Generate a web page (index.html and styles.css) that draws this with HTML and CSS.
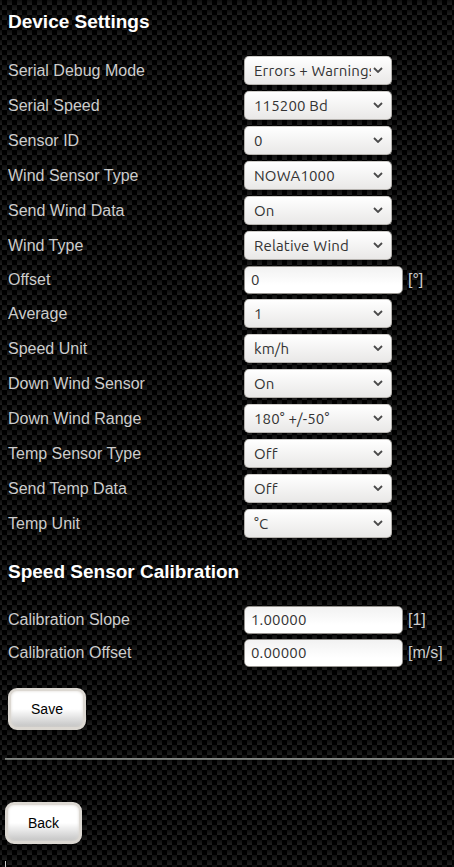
FILE: index.html
```html
<!DOCTYPE html>
<html lang="en">
<head>
<meta charset="utf-8">
<title>Device Settings</title>
<link rel="stylesheet" href="styles.css">
</head>
<body>
<form class="settings">
<h3>Device Settings</h3>
<div class="row"><label>Serial Debug Mode</label><div class="select"><span class="value">Errors + Warnings</span><svg viewBox="0 0 10 6"><path d="M1 1l4 4 4-4"/></svg></div></div>
<div class="row"><label>Serial Speed</label><div class="select"><span class="value">115200 Bd</span><svg viewBox="0 0 10 6"><path d="M1 1l4 4 4-4"/></svg></div></div>
<div class="row"><label>Sensor ID</label><div class="select"><span class="value">0</span><svg viewBox="0 0 10 6"><path d="M1 1l4 4 4-4"/></svg></div></div>
<div class="row"><label>Wind Sensor Type</label><div class="select"><span class="value">NOWA1000</span><svg viewBox="0 0 10 6"><path d="M1 1l4 4 4-4"/></svg></div></div>
<div class="row"><label>Send Wind Data</label><div class="select"><span class="value">On</span><svg viewBox="0 0 10 6"><path d="M1 1l4 4 4-4"/></svg></div></div>
<div class="row"><label>Wind Type</label><div class="select"><span class="value">Relative Wind</span><svg viewBox="0 0 10 6"><path d="M1 1l4 4 4-4"/></svg></div></div>
<div class="row field"><label>Offset</label><input type="text" value="0"><span class="unit">[°]</span></div>
<div class="row"><label>Average</label><div class="select"><span class="value">1</span><svg viewBox="0 0 10 6"><path d="M1 1l4 4 4-4"/></svg></div></div>
<div class="row"><label>Speed Unit</label><div class="select"><span class="value">km/h</span><svg viewBox="0 0 10 6"><path d="M1 1l4 4 4-4"/></svg></div></div>
<div class="row"><label>Down Wind Sensor</label><div class="select"><span class="value">On</span><svg viewBox="0 0 10 6"><path d="M1 1l4 4 4-4"/></svg></div></div>
<div class="row"><label>Down Wind Range</label><div class="select"><span class="value">180° +/-50°</span><svg viewBox="0 0 10 6"><path d="M1 1l4 4 4-4"/></svg></div></div>
<div class="row"><label>Temp Sensor Type</label><div class="select"><span class="value">Off</span><svg viewBox="0 0 10 6"><path d="M1 1l4 4 4-4"/></svg></div></div>
<div class="row"><label>Send Temp Data</label><div class="select"><span class="value">Off</span><svg viewBox="0 0 10 6"><path d="M1 1l4 4 4-4"/></svg></div></div>
<div class="row"><label>Temp Unit</label><div class="select"><span class="value">°C</span><svg viewBox="0 0 10 6"><path d="M1 1l4 4 4-4"/></svg></div></div>
<h3 class="second">Speed Sensor Calibration</h3>
<div class="row field"><label>Calibration Slope</label><input type="text" value="1.00000"><span class="unit">[1]</span></div>
<div class="row field"><label>Calibration Offset</label><input type="text" value="0.00000"><span class="unit">[m/s]</span></div>
<button type="button" class="btn save">Save</button>
</form>
<hr>
<button type="button" class="btn back">Back</button>
<div class="frame-edge"></div>
</body>
</html>
```
FILE: styles.css
```css
* { box-sizing: border-box; }
html { background: #000; }
body {
  margin: 0;
  height: 867px;
  overflow: hidden;
  padding-left: 5px;
  color: #ccc;
  font: 16px/18px "Liberation Sans", Arial, sans-serif;
  background:
    conic-gradient(#000 25%, transparent 0 50%, #000 0 75%, transparent 0) 7px 0 / 10px 10px,
    linear-gradient(#0f0f0f, #202020) 0 0 / 5px 5px;
}
.settings { padding-left: 3px; }
h3 {
  margin: 0;
  padding-top: 11px;
  height: 53px;
  font-size: 19px;
  line-height: 21px;
  color: #fff;
}
h3.second { padding-top: 20px; height: 62px; }
.row {
  display: flex;
  align-items: center;
  height: 35px;
}
.row.field { height: 33px; }
label { width: 236px; flex: none; }
.select {
  display: flex;
  align-items: center;
  width: 148px;
  height: 29px;
  padding: 0 8px 0 9px;
  border: 1px solid #b5b2ae;
  border-top-color: #cfcdca;
  border-radius: 5px;
  background: linear-gradient(#fff, #e9e8e7);
  color: #333;
}
.value, input { font: 15px/20px Ubuntu, "Noto Sans", sans-serif; letter-spacing: 0.15px; }
.value {
  width: 117px;
  margin-right: 2px;
  overflow: hidden;
  white-space: nowrap;
  flex: none;
}
.select svg {
  width: 10px;
  height: 6px;
  margin-top: -1px;
  flex: none;
  fill: none;
  stroke: #4a4a4a;
  stroke-width: 1.8;
}
input {
  width: 159px;
  height: 28px;
  margin: 0;
  padding: 0 6px;
  border: 1px solid #96938f;
  border-radius: 5px;
  background: linear-gradient(#f2f2f2, #fff 70%);
  color: #333;
}
.unit { margin-left: 5px; }
.btn {
  display: block;
  height: 42px;
  padding: 0;
  border: 3px solid #dcd8d2;
  border-radius: 9px;
  background: linear-gradient(#fff 50%, #c4c4c4);
  box-shadow: inset 0 0 3px #dcd8d2;
  font: 14px "Liberation Sans", Arial, sans-serif;
  color: #000;
}
.save { width: 78px; margin-top: 19px; }
.back { width: 77px; }
hr {
  height: 2px;
  margin: 28px 0 42px;
  border: 0;
  background: linear-gradient(#8c8f8c, #666966);
}
.frame-edge { width: 1px; height: 6px; margin-top: 17px; background: #ccc; }
```
